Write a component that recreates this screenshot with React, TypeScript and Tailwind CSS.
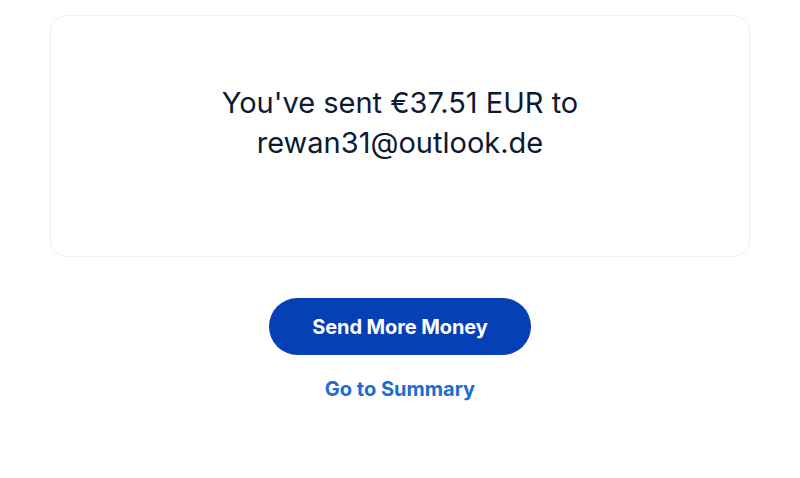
export default function App() {
  return (
    <div className="min-h-[478px] w-full bg-white font-['Inter',sans-serif]">
      <div className="px-[50px] pt-[15px]">
        {/* Confirmation card */}
        <div className="flex h-[242px] flex-col items-center justify-center rounded-2xl border border-[#efefef] bg-white pb-[26px]">
          <p className="text-center text-[29px] leading-[40px] text-[#0c1a33]">
            You've sent €37.51 EUR to
            <br />
            rewan31@outlook.de
          </p>
        </div>
      </div>

      {/* Actions */}
      <div className="mt-[41px] flex flex-col items-center">
        <button className="h-[57px] w-[262px] rounded-full bg-[#0640b6] text-[20px] font-bold tracking-[-0.1px] text-white">
          Send More Money
        </button>
        <a className="mt-[19px] text-[20px] font-bold text-[#1c6cd3]">Go to Summary</a>
      </div>
    </div>
  );
}
